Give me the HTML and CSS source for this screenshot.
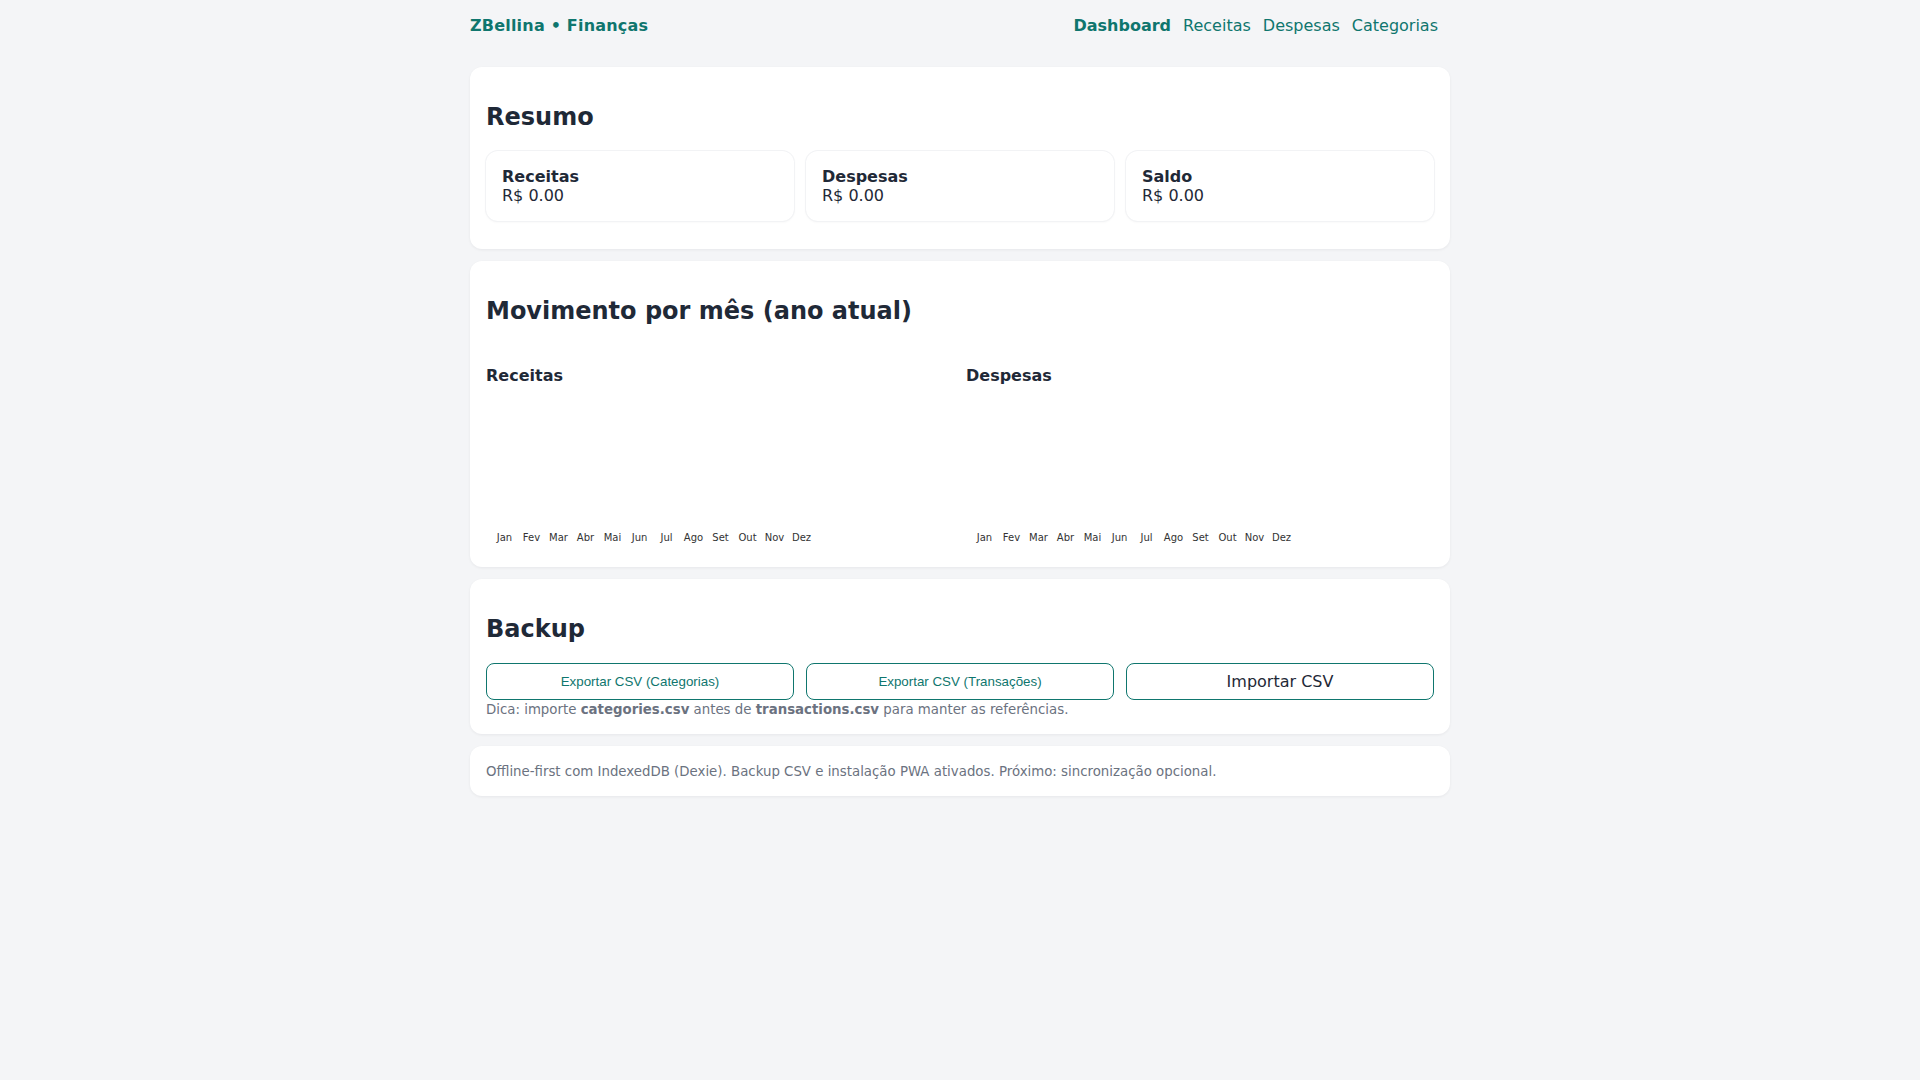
FILE: index.html
```html
<!DOCTYPE html>
<html lang="pt-BR">
<head>
<meta charset="utf-8">
<title>ZBellina • Finanças</title>
<link rel="stylesheet" href="styles.css">
</head>
<body>
<header class="topbar">
  <a class="brand" href="#">ZBellina • Finanças</a>
  <nav class="nav">
    <a class="nav-link active" href="#">Dashboard</a>
    <a class="nav-link" href="#">Receitas</a>
    <a class="nav-link" href="#">Despesas</a>
    <a class="nav-link" href="#">Categorias</a>
  </nav>
</header>
<main class="container">
  <section class="card">
    <h2 class="card-title">Resumo</h2>
    <div class="grid3 stats">
      <div class="stat"><div class="stat-label">Receitas</div><div class="stat-value">R$ 0.00</div></div>
      <div class="stat"><div class="stat-label">Despesas</div><div class="stat-value">R$ 0.00</div></div>
      <div class="stat"><div class="stat-label">Saldo</div><div class="stat-value">R$ 0.00</div></div>
    </div>
  </section>

  <section class="card">
    <h2 class="card-title">Movimento por mês (ano atual)</h2>
    <div class="charts">
      <div class="chart">
        <h3 class="chart-title">Receitas</h3>
        <svg class="chart-svg" width="468" height="158" viewBox="0 0 468 158">
          <g class="months">
            <text x="18.5" y="148">Jan</text><text x="45.5" y="148">Fev</text><text x="72.5" y="148">Mar</text><text x="99.5" y="148">Abr</text><text x="126.5" y="148">Mai</text><text x="153.5" y="148">Jun</text><text x="180.5" y="148">Jul</text><text x="207.5" y="148">Ago</text><text x="234.5" y="148">Set</text><text x="261.5" y="148">Out</text><text x="288.5" y="148">Nov</text><text x="315.5" y="148">Dez</text>
          </g>
        </svg>
      </div>
      <div class="chart">
        <h3 class="chart-title">Despesas</h3>
        <svg class="chart-svg" width="468" height="158" viewBox="0 0 468 158">
          <g class="months">
            <text x="18.5" y="148">Jan</text><text x="45.5" y="148">Fev</text><text x="72.5" y="148">Mar</text><text x="99.5" y="148">Abr</text><text x="126.5" y="148">Mai</text><text x="153.5" y="148">Jun</text><text x="180.5" y="148">Jul</text><text x="207.5" y="148">Ago</text><text x="234.5" y="148">Set</text><text x="261.5" y="148">Out</text><text x="288.5" y="148">Nov</text><text x="315.5" y="148">Dez</text>
          </g>
        </svg>
      </div>
    </div>
  </section>

  <section class="card">
    <h2 class="card-title">Backup</h2>
    <div class="grid3">
      <button class="btn" type="button">Exportar CSV (Categorias)</button>
      <button class="btn" type="button">Exportar CSV (Transações)</button>
      <label class="btn-file">Importar CSV</label>
    </div>
    <p class="tip">Dica: importe <b>categories.csv</b> antes de <b>transactions.csv</b> para manter as referências.</p>
  </section>

  <section class="card footer-card">
    Offline-first com IndexedDB (Dexie). Backup CSV e instalação PWA ativados. Próximo: sincronização opcional.
  </section>
</main>
</body>
</html>
```

FILE: styles.css
```css
* { box-sizing: border-box; }

body {
  margin: 0;
  background: #f4f5f7;
  color: #1f2937;
  font-family: "DejaVu Sans", Verdana, sans-serif;
  font-size: 16px;
}

.topbar {
  max-width: 980px;
  margin: 0 auto;
  padding: 16px 12px 16px 0;
  display: flex;
  justify-content: space-between;
  align-items: center;
}

.brand {
  color: #0f766e;
  font-weight: bold;
  letter-spacing: 0.2px;
  text-decoration: none;
}

.nav {
  display: flex;
  gap: 12px;
}

.nav-link {
  color: #0f766e;
  text-decoration: none;
}

.nav-link.active { font-weight: bold; }

.container {
  max-width: 980px;
  margin: 0 auto;
  padding: 16px 0;
}

.card {
  background: #fff;
  border-radius: 12px;
  padding: 16px;
  margin-bottom: 12px;
  box-shadow: 0 1px 3px rgba(15, 23, 42, 0.06);
}

.card-title {
  font-size: 24px;
  font-weight: bold;
  margin: 20px 0;
  color: #1f2937;
}

.grid3 {
  display: grid;
  grid-template-columns: repeat(3, 1fr);
  gap: 12px;
}

.stats { margin-bottom: 12px; }

.stat {
  border-radius: 12px;
  padding: 16px;
  box-shadow: 0 0 0 1px #f2f3f5, 0 1px 3px rgba(15, 23, 42, 0.05);
}

.stat-label { font-weight: bold; }

.charts {
  display: grid;
  grid-template-columns: 1fr 1fr;
  gap: 12px;
}

.chart-title {
  font-size: 16px;
  font-weight: bold;
  margin: 21px 0 8px;
}

.chart-svg { display: block; }

.months text {
  font-family: "DejaVu Sans", sans-serif;
  font-size: 10px;
  fill: #333;
  text-anchor: middle;
}

.btn {
  background: #fff;
  border: 1px solid #0f766e;
  border-radius: 8px;
  color: #0f766e;
  font-family: "Liberation Sans", Arial, sans-serif;
  font-size: 13.33px;
  padding: 8px 12px;
  cursor: pointer;
}

.btn-file {
  display: block;
  text-align: center;
  background: #fff;
  border: 1px solid #0f766e;
  border-radius: 8px;
  color: #1f2937;
  padding: 8px 12px;
  cursor: pointer;
}

.tip {
  margin: 2px 0 0;
  font-size: 13.33px;
  line-height: 16px;
  color: #6b7280;
}

.footer-card {
  padding: 18px 16px 16px;
  font-size: 13.33px;
  line-height: 16px;
  color: #6b7280;
}
```
